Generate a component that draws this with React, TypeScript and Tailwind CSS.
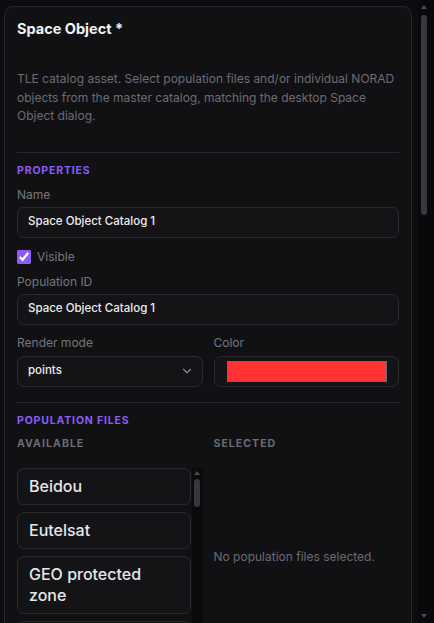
import { ChevronDown } from 'lucide-react';

const POPULATIONS = [
  'Beidou',
  'Eutelsat',
  'GEO protected zone',
  'Galileo',
  'Glonass',
  'GPS operational',
  'Intelsat',
  'Iridium',
  'Iridium NEXT',
  'LEO protected zone',
  'Molniya',
  'OneWeb',
  'Orbcomm',
  'Planet',
  'SES',
  'Spire',
  'Starlink',
  'Telesat',
  'Weather',
  'Debris',
];

const font = { fontFamily: 'Inter, "Noto Sans", "Liberation Sans", sans-serif' };

// Scrollbars are drawn as plain elements so they show regardless of the browser's overlay setting
function ScrollTrack({
  width,
  arrow,
  thumbTop,
  thumbHeight,
  thumbWidth,
  track,
}: {
  width: string;
  arrow: string;
  thumbTop: string;
  thumbHeight: string;
  thumbWidth: string;
  track: string;
}) {
  return (
    <div className={`${width} ${track} shrink-0 flex flex-col items-center`}>
      <div className={`${arrow} flex items-center justify-center`}>
        <svg width="6" height="4" viewBox="0 0 6 4">
          <path d="M3 0 L6 4 L0 4 Z" fill="#4a4a4f" />
        </svg>
      </div>
      <div className={`${thumbTop} ${thumbHeight} ${thumbWidth} rounded-full bg-[#38383c]`} />
      <div className="flex-1" />
      <div className={`${arrow} flex items-center justify-center`}>
        <svg width="6" height="4" viewBox="0 0 6 4">
          <path d="M0 0 L6 0 L3 4 Z" fill="#4a4a4f" />
        </svg>
      </div>
    </div>
  );
}

function Label({ children }: { children: React.ReactNode }) {
  return <div className="text-[12px] leading-[18px] text-[#76767d]">{children}</div>;
}

function TextBox({ value }: { value: string }) {
  return (
    <div className="mt-[3px] h-[31px] flex items-center rounded-[7px] border border-[#2a2a2f] bg-[#141417] px-[10px] text-[11.5px] font-medium text-[#ececef]">
      {value}
    </div>
  );
}

function SectionTitle({ children }: { children: React.ReactNode }) {
  return (
    <div className="text-[10.5px] leading-4 font-bold tracking-[0.08em] text-[#8b5cf6]">{children}</div>
  );
}

export default function App() {
  return (
    <div className="h-[623px] flex bg-[#0c0c0f] overflow-hidden" style={font}>
      <div className="flex-1 min-w-0 overflow-hidden">
        <div className="ml-[4px] mr-[6px] mt-[6px] rounded-[9px] border border-[#26262b] bg-[#111114] px-3 pt-[10px] pb-6">
          <h1 className="text-[14.5px] leading-6 font-bold text-[#f2f2f4]">Space Object *</h1>

          <p className="mt-[29px] text-[12px] leading-[18.5px] text-[#6c6c73]">
            TLE catalog asset. Select population files and/or individual NORAD objects from the master
            catalog, matching the desktop Space Object dialog.
          </p>

          <div className="mt-[26px] border-t border-[#26262b]" />

          <div className="pt-[10px]">
            <SectionTitle>PROPERTIES</SectionTitle>

            <div className="mt-[7px]">
              <Label>Name</Label>
              <TextBox value="Space Object Catalog 1" />
            </div>

            <label className="mt-[10px] flex items-center gap-[6px] text-[12px] leading-[18px] text-[#76767d]">
              <input type="checkbox" defaultChecked className="h-[14px] w-[14px] accent-[#8b5cf6]" />
              Visible
            </label>

            <div className="mt-[7px]">
              <Label>Population ID</Label>
              <TextBox value="Space Object Catalog 1" />
            </div>

            <div className="mt-[9px] grid grid-cols-2 gap-[11px]">
              <div>
                <Label>Render mode</Label>
                <div className="mt-1 h-[31px] flex items-center justify-between rounded-[7px] border border-[#2a2a2f] bg-[#141417] pl-[10px] pr-[8px] text-[11.5px] font-medium text-[#ececef]">
                  points
                  <ChevronDown className="h-[14px] w-[14px] text-[#8a8a90]" strokeWidth={2} />
                </div>
              </div>
              <div>
                <Label>Color</Label>
                <div className="mt-1 h-[31px] flex items-center rounded-[7px] border border-[#2a2a2f] bg-[#141417] pl-[12px] pr-[11px]">
                  <div className="h-[21px] w-full border border-[#6b6b6b] bg-[#ff3333]" />
                </div>
              </div>
            </div>
          </div>

          <div className="mt-[15px] border-t border-[#26262b]" />

          <div className="pt-[10px]">
            <SectionTitle>POPULATION FILES</SectionTitle>

            <div className="mt-[7px] grid grid-cols-2 gap-[11px]">
              <div className="text-[10.5px] leading-4 font-bold tracking-[0.1em] text-[#6c6c72]">AVAILABLE</div>
              <div className="text-[10.5px] leading-4 font-bold tracking-[0.1em] text-[#6c6c72]">SELECTED</div>
            </div>

            <div className="mt-[16px] grid grid-cols-2 gap-[11px]">
              <div className="h-[178px] flex">
                <div className="flex-1 min-w-0 overflow-hidden flex flex-col gap-[7px]">
                  {POPULATIONS.map((p) => (
                    <div
                      key={p}
                      className="shrink-0 rounded-[7px] border border-[#2a2a2f] bg-[#141417] px-[11px] py-[7px] text-[16px] leading-[21px] font-medium text-[#e6e6e9]"
                    >
                      {p}
                    </div>
                  ))}
                </div>
                <ScrollTrack
                  width="w-[11px] ml-[1px]"
                  track="bg-[#0b0b0d]"
                  arrow="h-[11px] w-full"
                  thumbTop="mt-0"
                  thumbHeight="h-[28px]"
                  thumbWidth="w-[6px]"
                />
              </div>
              <div className="flex items-center text-[12px] text-[#6a6a70]">No population files selected.</div>
            </div>
          </div>

          <div className="mt-6 border-t border-[#26262b]" />

          <div className="pt-[10px]">
            <SectionTitle>NORAD OBJECTS</SectionTitle>
            <div className="mt-[7px]">
              <Label>Search master catalog</Label>
              <TextBox value="" />
            </div>
          </div>
        </div>
      </div>

      <ScrollTrack
        width="w-[16px] pr-[4px]"
        track="bg-[#09090b]"
        arrow="h-[14px] w-full"
        thumbTop="mt-[1px]"
        thumbHeight="h-[200px]"
        thumbWidth="w-[6px]"
      />
    </div>
  );
}
